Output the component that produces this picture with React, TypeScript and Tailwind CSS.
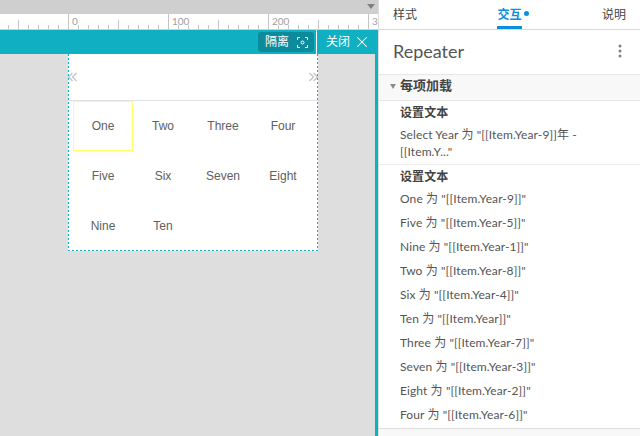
import { X } from 'lucide-react';

const uiFont = "font-['Lato','Noto_Sans_CJK_SC',sans-serif]";

const cells = ['One', 'Two', 'Three', 'Four', 'Five', 'Six', 'Seven', 'Eight', 'Nine', 'Ten'];

const actions = [
  'One 为 "[[Item.Year-9]]"',
  'Five 为 "[[Item.Year-5]]"',
  'Nine 为 "[[Item.Year-1]]"',
  'Two 为 "[[Item.Year-8]]"',
  'Six 为 "[[Item.Year-4]]"',
  'Ten 为 "[[Item.Year]]"',
  'Three 为 "[[Item.Year-7]]"',
  'Seven 为 "[[Item.Year-3]]"',
  'Eight 为 "[[Item.Year-2]]"',
  'Four 为 "[[Item.Year-6]]"',
];

function Ruler() {
  const ticks: number[] = [];
  for (let x = 8; x < 378; x += 10) ticks.push(x);
  return (
    <svg width="378" height="16" className="block bg-white">
      {ticks.map((x) => {
        const major = (x - 68) % 100 === 0;
        const mid = (x - 68) % 50 === 0;
        return (
          <line key={x} x1={x + 0.5} x2={x + 0.5} y1={major ? 0 : mid ? 6 : 11} y2={15} stroke="#c4c4c4" />
        );
      })}
      <line x1="0" x2="378" y1="15.5" y2="15.5" stroke="#d0d0d0" />
      {[[72, '0'], [172, '100'], [272, '200'], [372, '3']].map(([x, t]) => (
        <text key={t} x={x} y="11" fontSize="10" fill="#a0a0a0" fontFamily="Lato, sans-serif">
          {t}
        </text>
      ))}
    </svg>
  );
}

function Arrows({ dir }: { dir: 'left' | 'right' }) {
  const d = dir === 'left' ? ['M4.5 1 L0.5 5 L4.5 9', 'M8.5 1 L4.5 5 L8.5 9'] : ['M0.5 1 L4.5 5 L0.5 9', 'M4.5 1 L8.5 5 L4.5 9'];
  return (
    <svg width="9" height="10" fill="none" stroke="#c4c4cc" strokeWidth="1.4">
      <path d={d[0]} />
      <path d={d[1]} />
    </svg>
  );
}

export default function App() {
  return (
    <div className={`flex h-[436px] w-[640px] overflow-hidden bg-white ${uiFont}`}>
      <div className="flex w-[378px] flex-col">
        <div className="flex h-[14px] items-center justify-end bg-[#cfcfcf] pr-[3px]">
          <svg width="8" height="5" className="mr-0 -mt-px">
            <path d="M0 0 H8 L4 5 Z" fill="#808080" />
          </svg>
        </div>
        <Ruler />
        <div className="flex min-h-0 flex-1 flex-col border-r-[3px] border-[#10afc2]">
          <div className="flex h-[24px] items-center justify-end bg-[#10afc2] text-[12px] text-white">
            <div className="flex h-[20px] w-[56px] items-center justify-between rounded-[3px] bg-[#0b8b9b] pl-[7px] pr-[6px]">
              <span>隔离</span>
              <svg width="11" height="11" fill="none" stroke="white">
                <path d="M0.5 3 V0.5 H3 M8 0.5 H10.5 V3 M10.5 8 V10.5 H8 M3 10.5 H0.5 V8" />
                <circle cx="5.5" cy="5.5" r="1.5" />
              </svg>
            </div>
            <div className="ml-[2px] h-full w-px bg-white" />
            <div className="flex h-full w-[58px] items-center pl-[9px]">
              <span>关闭</span>
              <X className="ml-[3px] h-[18px] w-[18px]" strokeWidth={1.4} />
            </div>
          </div>
          <div className="flex-1 bg-[#dedede] pl-[68px]">
            <div className="h-[197px] w-[250px] bg-white bg-[linear-gradient(#10afc2_50%,transparent_50%),linear-gradient(#10afc2_50%,transparent_50%),linear-gradient(90deg,#10afc2_50%,transparent_50%)] [background-position:left_top,right_top,left_bottom] [background-repeat:repeat-y,repeat-y,repeat-x] [background-size:1px_4px,1px_4px,4px_1px]">
              <div className="flex h-[47px] items-center justify-between border-b border-[#e0e0e8] pb-[1px]">
                <Arrows dir="left" />
                <Arrows dir="right" />
              </div>
              <div className="grid grid-cols-[60px_60px_60px_60px] auto-rows-[50px] pl-[5px] font-['Liberation_Sans',sans-serif] text-[12px] text-[#606060]">
                {cells.map((c, i) => (
                  <div
                    key={c}
                    className={`flex items-center justify-center ${i === 0 ? 'border border-[#ffff66]' : ''}`}
                  >
                    {c}
                  </div>
                ))}
              </div>
            </div>
          </div>
        </div>
      </div>

      <div className="flex min-w-0 flex-1 flex-col border-l border-[#dddddd] text-[#555555]">
        <div className="flex h-[30px] justify-between border-b border-[#d8d8d8] pl-[14px] pr-[14px] text-[12px] text-[#444444]">
          <span className="pt-[6px]">样式</span>
          <div className="relative flex border-b-[3px] border-[#0a8fde] font-bold text-[#0a8fde]">
            <span className="pt-[6px]">交互</span>
            <span className="absolute left-[27px] top-[11px] h-[5px] w-[5px] rounded-full bg-[#0a8fde]" />
          </div>
          <span className="pt-[6px]">说明</span>
        </div>
        <div className="flex h-[44px] items-center justify-between pb-[2px] pl-[14px] pr-[18px] text-[18px] text-[#555555]">
          <span>Repeater</span>
          <svg width="4" height="14" fill="#808080">
            <circle cx="2" cy="2" r="1.5" />
            <circle cx="2" cy="7" r="1.5" />
            <circle cx="2" cy="12" r="1.5" />
          </svg>
        </div>
        <div className="flex h-[27px] items-center gap-[4px] border-y border-[#e6e6e6] bg-[#f8f8f8] pl-[11px] pb-[3px] text-[13px] font-bold text-[#444444]">
          <svg width="6" height="5">
            <path d="M0 0 H6 L3 5 Z" fill="#8c8c8c" />
          </svg>
          <span>每项加载</span>
        </div>
        <div className="border-b border-[#ececec] pl-[21px] pr-[8px] text-[12px] tracking-[0.1px]">
          <div className="flex h-[24px] items-center font-bold text-[#444444]">设置文本</div>
          <div className="pb-[4px] pt-[1px] leading-[17px]">
            Select Year 为 "[[Item.Year-9]]年 -
            <br />
            [[Item.Y..."
          </div>
        </div>
        <div className="flex-1 pl-[21px] text-[12px] tracking-[0.1px]">
          <div className="flex h-[22px] items-center pt-[2px] font-bold text-[#444444]">设置文本</div>
          {actions.map((a) => (
            <div key={a} className="flex h-[24px] items-center">
              {a}
            </div>
          ))}
        </div>
        <div className="h-[8px] border-t border-[#dddddd] bg-[#f8f8f8]" />
      </div>
    </div>
  );
}
